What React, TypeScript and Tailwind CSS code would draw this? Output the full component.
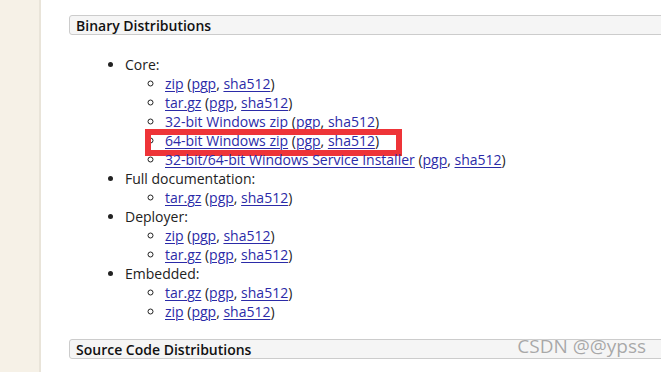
import React from 'react';

const SECTIONS: { label: string; files: string[] }[] = [
  { label: 'Core:', files: ['zip', 'tar.gz', '32-bit Windows zip', '64-bit Windows zip', '32-bit/64-bit Windows Service Installer'] },
  { label: 'Full documentation:', files: ['tar.gz'] },
  { label: 'Deployer:', files: ['zip', 'tar.gz'] },
  { label: 'Embedded:', files: ['tar.gz', 'zip'] },
];

const A: React.FC<{ children: React.ReactNode }> = ({ children }) => (
  <a href="#" className="text-[#2b2ba8] underline underline-offset-2 decoration-1">
    {children}
  </a>
);

const FileRow: React.FC<{ name: string; boxed?: boolean }> = ({ name, boxed }) => (
  <li className="relative whitespace-nowrap">
    <A>{name}</A> (<A>pgp</A>, <A>sha512</A>)
    {/* red annotation box drawn over the screenshot */}
    {boxed && (
      <span className="absolute left-[-20px] top-[-2px] w-[257px] h-[27px] border-[6px] border-[#ee3438] pointer-events-none" />
    )}
  </li>
);

const Heading: React.FC<{ children: React.ReactNode }> = ({ children }) => (
  <div className="h-[20px] w-[640px] border border-[#cccccc] rounded-[3px] bg-[#f5f5f5] pl-[6px] flex items-center text-[14px] font-semibold text-[#111]">
    {children}
  </div>
);

export default function App() {
  return (
    <div
      className="w-[661px] h-[372px] flex overflow-hidden bg-white text-[#222]"
      style={{ fontFamily: '"Open Sans", "Noto Sans", sans-serif' }}
    >
      <div className="w-[41px] h-full bg-[#f6f1e7] border-r-2 border-[#e9e4d9] shrink-0" />
      <div className="relative flex-1 flex flex-col overflow-hidden pt-[15px] pl-[28px]">
        <Heading>Binary Distributions</Heading>
        <ul className="list-disc pl-[56px] mt-[20px] text-[14px] leading-[19px]">
          {SECTIONS.map((s) => (
            <li key={s.label}>
              {s.label}
              <ul className="list-[circle] pl-[40px]">
                {s.files.map((f) => (
                  <FileRow key={f} name={f} boxed={s.label === 'Core:' && f === '64-bit Windows zip'} />
                ))}
              </ul>
            </li>
          ))}
        </ul>
        <div className="mt-[18px]">
          <Heading>Source Code Distributions</Heading>
        </div>
        <div
          className="absolute right-[15px] bottom-[12px] text-[19px] text-[#a8a8a8]"
          style={{ textShadow: '0 0 1px #fff' }}
        >
          CSDN @@ypss
        </div>
      </div>
    </div>
  );
}
